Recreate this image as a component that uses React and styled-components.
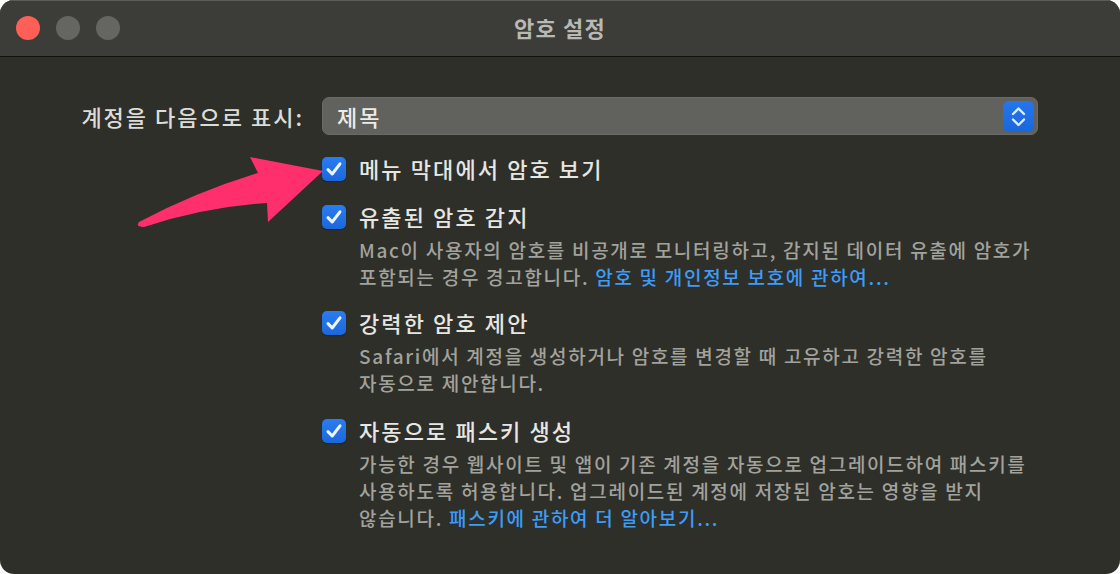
import React from 'react';
import styled, { createGlobalStyle } from 'styled-components';

const GlobalStyle = createGlobalStyle`
  html, body {
    margin: 0;
    padding: 0;
    background: #ffffff;
  }
  body {
    font-family: 'Noto Sans CJK KR', 'Noto Sans', sans-serif;
    -webkit-font-smoothing: antialiased;
  }
`;

const options = [
  {
    title: '메뉴 막대에서 암호 보기',
  },
  {
    title: '유출된 암호 감지',
    lines: [
      ['Mac이 사용자의 암호를 비공개로 모니터링하고, 감지된 데이터 유출에 암호가'],
      ['포함되는 경우 경고합니다. ', { link: '암호 및 개인정보 보호에 관하여...' }],
    ],
  },
  {
    title: '강력한 암호 제안',
    lines: [
      ['Safari에서 계정을 생성하거나 암호를 변경할 때 고유하고 강력한 암호를'],
      ['자동으로 제안합니다.'],
    ],
  },
  {
    title: '자동으로 패스키 생성',
    space: 18,
    lines: [
      ['가능한 경우 웹사이트 및 앱이 기존 계정을 자동으로 업그레이드하여 패스키를'],
      ['사용하도록 허용합니다. 업그레이드된 계정에 저장된 암호는 영향을 받지'],
      ['않습니다. ', { link: '패스키에 관하여 더 알아보기...' }],
    ],
  },
];

const CheckIcon = () => (
  <svg width="24" height="24" viewBox="0 0 24 24">
    <path
      d="M6 12.6 L10.2 17 L18 6.8"
      fill="none"
      stroke="#eef4ff"
      strokeWidth="3"
      strokeLinecap="round"
      strokeLinejoin="round"
    />
  </svg>
);

const StepperIcon = () => (
  <svg width="31" height="31" viewBox="0 0 31 31">
    <path
      d="M10 13 L15.5 7.5 L21 13"
      fill="none"
      stroke="#e3ecff"
      strokeWidth="2.4"
      strokeLinecap="round"
      strokeLinejoin="round"
    />
    <path
      d="M10 18.5 L15.5 24 L21 18.5"
      fill="none"
      stroke="#e3ecff"
      strokeWidth="2.4"
      strokeLinecap="round"
      strokeLinejoin="round"
    />
  </svg>
);

const Arrow = () => (
  <ArrowLayer width="200" height="90" viewBox="130 145 200 90">
    <path
      d="M139 222 Q 196 192 258 173 L250 157 L323 171 L268 222 L267 203 Q 205 207 144 227 Q 135 227 139 222 Z"
      fill="#ff2e6d"
    />
  </ArrowLayer>
);

const PasswordSettings = () => {
  return (
    <>
      <GlobalStyle />
      <Window>
        <TitleBar>
          <Lights>
            <Light color="#fe5f57" />
            <Light color="#656661" />
            <Light color="#656661" />
          </Lights>
          <Title>암호 설정</Title>
          <div />
        </TitleBar>
        <Content>
          <Label>계정을 다음으로 표시:</Label>
          <Popup>
            <PopupText>제목</PopupText>
            <Stepper>
              <StepperIcon />
            </Stepper>
          </Popup>
          <Spacer />
          <OptionList>
            {options.map((opt) => (
              <Option key={opt.title} $space={opt.space}>
                <Checkbox>
                  <CheckIcon />
                </Checkbox>
                <OptionBody>
                  <OptionTitle>{opt.title}</OptionTitle>
                  {opt.lines && (
                    <Description>
                      {opt.lines.map((line, i) => (
                        <DescLine key={i}>
                          {line.map((part, j) =>
                            typeof part === 'string' ? (
                              <span key={j}>{part}</span>
                            ) : (
                              <Link key={j}>{part.link}</Link>
                            )
                          )}
                        </DescLine>
                      ))}
                    </Description>
                  )}
                </OptionBody>
              </Option>
            ))}
          </OptionList>
        </Content>
        <Arrow />
      </Window>
    </>
  );
};

const Window = styled.div`
  position: relative;
  width: 100vw;
  height: 100vh;
  background-color: #2e2f29;
  border-radius: 14px;
  overflow: hidden;
  display: flex;
  flex-direction: column;
`;

const TitleBar = styled.div`
  flex: none;
  background-color: #3c3d38;
  border-top: 1px solid #5c5d58;
  border-bottom: 1px solid #121210;
  box-sizing: border-box;
  height: 57px;
  display: grid;
  grid-template-columns: 1fr auto 1fr;
  align-items: center;
`;

const Lights = styled.div`
  display: flex;
  gap: 16px;
  padding-left: 16px;
  margin-top: -2px;
`;

const Light = styled.span`
  width: 24px;
  height: 24px;
  border-radius: 50%;
  background-color: ${(p) => p.color};
`;

const Title = styled.div`
  font-size: 22px;
  font-weight: 700;
  color: #b8b9b4;
  letter-spacing: 1.2px;
  margin-top: -4px;
`;

const Content = styled.div`
  display: grid;
  grid-template-columns: 302px 716px;
  column-gap: 20px;
  padding-top: 40px;
  align-items: start;
`;

const Label = styled.div`
  font-size: 22px;
  font-weight: 500;
  line-height: 38px;
  color: #dcdcd8;
  letter-spacing: 2px;
  text-align: right;
  margin-right: -2px;
`;

const Popup = styled.div`
  height: 38px;
  box-sizing: border-box;
  background-color: #61625d;
  border: 1px solid #6a6b66;
  border-radius: 7px;
  display: flex;
  align-items: center;
  justify-content: space-between;
  padding: 0 3px 0 14px;
`;

const PopupText = styled.span`
  font-size: 22px;
  font-weight: 500;
  color: #ebebe7;
  letter-spacing: 2px;
`;

const Stepper = styled.span`
  width: 31px;
  height: 31px;
  border-radius: 6px;
  background: linear-gradient(#2476ec, #1a67dc);
  display: flex;
`;

const Spacer = styled.div``;

const OptionList = styled.div`
  display: flex;
  flex-direction: column;
  margin-top: 17px;
`;

const Option = styled.div`
  display: grid;
  grid-template-columns: 24px 1fr;
  column-gap: 13px;
  align-items: start;
  &:not(:first-child) {
    margin-top: ${(p) => p.$space || 16}px;
  }
`;

const Checkbox = styled.span`
  width: 24px;
  height: 24px;
  margin-top: 5px;
  border-radius: 5px;
  background: linear-gradient(#2a7cf0, #1b68dc);
  box-shadow: 0 1px 1px rgba(0, 0, 0, 0.35);
  display: flex;
`;

const OptionBody = styled.div`
  display: flex;
  flex-direction: column;
`;

const OptionTitle = styled.div`
  font-size: 22px;
  font-weight: 500;
  line-height: 32px;
  color: #e6e6e2;
  letter-spacing: 2.1px;
`;

const Description = styled.div`
  margin-top: 4px;
  font-size: 19px;
  font-weight: 500;
  line-height: 27px;
  color: #a2a29d;
  letter-spacing: 1.7px;
`;

const DescLine = styled.div`
  white-space: nowrap;
`;

const Link = styled.span`
  color: #3d9cf7;
`;

const ArrowLayer = styled.svg`
  position: absolute;
  left: 130px;
  top: 145px;
  pointer-events: none;
`;

export default PasswordSettings;
